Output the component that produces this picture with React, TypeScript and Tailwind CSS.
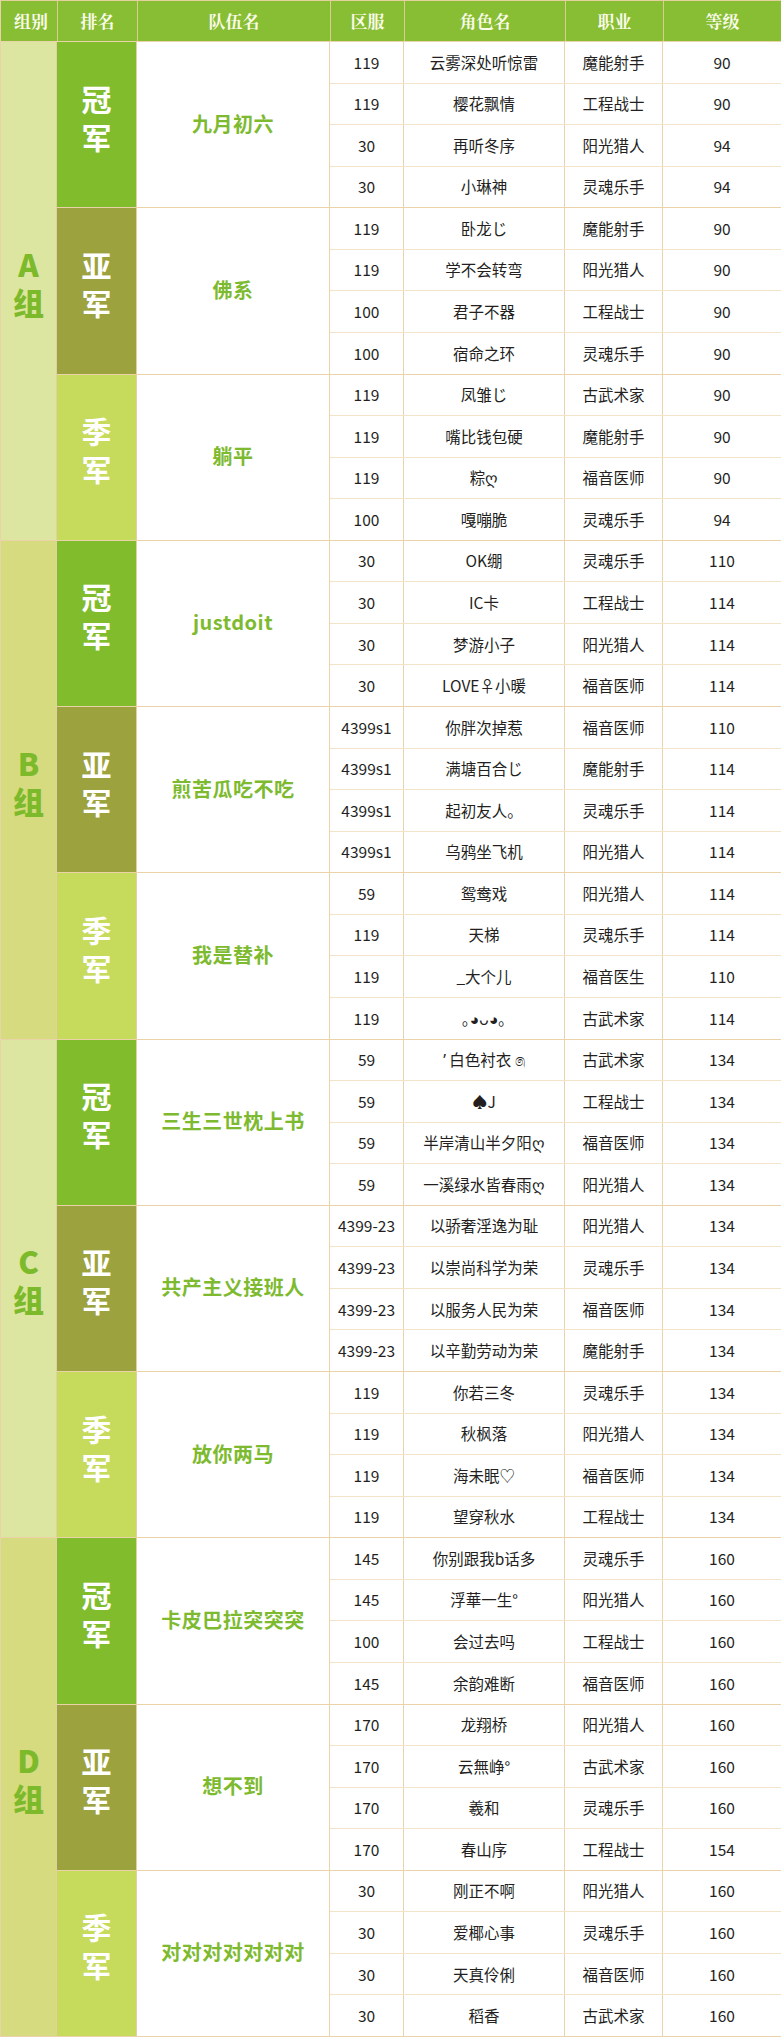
// Tournament results table — groups A-D, top three teams each

type Player = [server: string, name: string, job: string, level: string];

interface Rank {
  title: string;
  team: string;
  players: Player[];
}

interface Group {
  label: string;
  ranks: Rank[];
}

const GROUPS: Group[] = [
  {
    label: "A",
    ranks: [
      {
        title: "冠军",
        team: "九月初六",
        players: [
          ["119", "云雾深处听惊雷", "魔能射手", "90"],
          ["119", "樱花飘情", "工程战士", "90"],
          ["30", "再听冬序", "阳光猎人", "94"],
          ["30", "小琳神", "灵魂乐手", "94"],
        ],
      },
      {
        title: "亚军",
        team: "佛系",
        players: [
          ["119", "卧龙じ", "魔能射手", "90"],
          ["119", "学不会转弯", "阳光猎人", "90"],
          ["100", "君子不器", "工程战士", "90"],
          ["100", "宿命之环", "灵魂乐手", "90"],
        ],
      },
      {
        title: "季军",
        team: "躺平",
        players: [
          ["119", "凤雏じ", "古武术家", "90"],
          ["119", "嘴比钱包硬", "魔能射手", "90"],
          ["119", "粽ღ", "福音医师", "90"],
          ["100", "嘎嘣脆", "灵魂乐手", "94"],
        ],
      },
    ],
  },
  {
    label: "B",
    ranks: [
      {
        title: "冠军",
        team: "justdoit",
        players: [
          ["30", "OK绷", "灵魂乐手", "110"],
          ["30", "IC卡", "工程战士", "114"],
          ["30", "梦游小子", "阳光猎人", "114"],
          ["30", "LOVE♀小暖", "福音医师", "114"],
        ],
      },
      {
        title: "亚军",
        team: "煎苦瓜吃不吃",
        players: [
          ["4399s1", "你胖次掉惹", "福音医师", "110"],
          ["4399s1", "满塘百合じ", "魔能射手", "114"],
          ["4399s1", "起初友人。", "灵魂乐手", "114"],
          ["4399s1", "乌鸦坐飞机", "阳光猎人", "114"],
        ],
      },
      {
        title: "季军",
        team: "我是替补",
        players: [
          ["59", "鸳鸯戏", "阳光猎人", "114"],
          ["119", "天梯", "灵魂乐手", "114"],
          ["119", "_大个儿", "福音医生", "110"],
          ["119", "｡◕ᴗ◕｡", "古武术家", "114"],
        ],
      },
    ],
  },
  {
    label: "C",
    ranks: [
      {
        title: "冠军",
        team: "三生三世枕上书",
        players: [
          ["59", "ʼ 白色衬衣 ෧", "古武术家", "134"],
          ["59", "♠J", "工程战士", "134"],
          ["59", "半岸清山半夕阳ღ", "福音医师", "134"],
          ["59", "一溪绿水皆春雨ღ", "阳光猎人", "134"],
        ],
      },
      {
        title: "亚军",
        team: "共产主义接班人",
        players: [
          ["4399-23", "以骄奢淫逸为耻", "阳光猎人", "134"],
          ["4399-23", "以崇尚科学为荣", "灵魂乐手", "134"],
          ["4399-23", "以服务人民为荣", "福音医师", "134"],
          ["4399-23", "以辛勤劳动为荣", "魔能射手", "134"],
        ],
      },
      {
        title: "季军",
        team: "放你两马",
        players: [
          ["119", "你若三冬", "灵魂乐手", "134"],
          ["119", "秋枫落", "阳光猎人", "134"],
          ["119", "海未眠♡", "福音医师", "134"],
          ["119", "望穿秋水", "工程战士", "134"],
        ],
      },
    ],
  },
  {
    label: "D",
    ranks: [
      {
        title: "冠军",
        team: "卡皮巴拉突突突",
        players: [
          ["145", "你别跟我b话多", "灵魂乐手", "160"],
          ["145", "浮華一生°", "阳光猎人", "160"],
          ["100", "会过去吗", "工程战士", "160"],
          ["145", "余韵难断", "福音医师", "160"],
        ],
      },
      {
        title: "亚军",
        team: "想不到",
        players: [
          ["170", "龙翔桥", "阳光猎人", "160"],
          ["170", "云無峥°", "古武术家", "160"],
          ["170", "羲和", "灵魂乐手", "160"],
          ["170", "春山序", "工程战士", "154"],
        ],
      },
      {
        title: "季军",
        team: "对对对对对对对",
        players: [
          ["30", "刚正不啊", "阳光猎人", "160"],
          ["30", "爱椰心事", "灵魂乐手", "160"],
          ["30", "天真伶俐", "福音医师", "160"],
          ["30", "稻香", "古武术家", "160"],
        ],
      },
    ],
  },
];

const RANK_BG: Record<string, string> = {
  冠军: "bg-[#80bc2c]",
  亚军: "bg-[#9ca23d]",
  季军: "bg-[#c6da5b]",
};

const HEADERS = [
  { label: "组别", w: "w-[57px]" },
  { label: "排名", w: "w-[80px]" },
  { label: "队伍名", w: "w-[193px]" },
  { label: "区服", w: "w-[74px]" },
  { label: "角色名", w: "w-[161px]" },
  { label: "职业", w: "w-[98px]" },
  { label: "等级", w: "flex-1" },
];

function RankBlock({ rank, first }: { rank: Rank; first: boolean }) {
  return (
    <div className={`flex flex-1 ${first ? "" : "border-t border-[#ead3a8]"}`}>
      {/* Rank label, stacked vertically */}
      <div
        className={`w-[80px] shrink-0 flex items-center justify-center border-r border-[#e4cfa4] ${RANK_BG[rank.title]} pb-[4px]`}
      >
        <span className="[writing-mode:vertical-rl] text-[30px] leading-[30px] tracking-[8px] font-bold text-white">
          {rank.title}
        </span>
      </div>

      {/* Team name */}
      <div className="w-[193px] shrink-0 flex items-center justify-center border-r border-[#e8d3ab] bg-white pb-[2px]">
        <span className="text-[20px] font-bold text-[#7dba2f] tracking-[0.5px]">
          {rank.team}
        </span>
      </div>

      {/* Players */}
      <div className="flex flex-1 flex-col">
        {rank.players.map((p, i) => (
          <div
            key={p[1]}
            className={`flex flex-1 items-center text-[15.5px] text-[#241f1e] ${
              i === 0 ? "" : "border-t border-[#f2e3c9]"
            }`}
          >
            <div className="w-[74px] h-full shrink-0 flex items-center justify-center border-r border-[#e8d3ab]">
              {p[0]}
            </div>
            <div className="w-[161px] h-full shrink-0 flex items-center justify-center border-r border-[#e8d3ab] whitespace-nowrap">
              {p[1]}
            </div>
            <div className="w-[98px] h-full shrink-0 flex items-center justify-center border-r border-[#e8d3ab]">
              {p[2]}
            </div>
            <div className="flex-1 h-full flex items-center justify-center">{p[3]}</div>
          </div>
        ))}
      </div>
    </div>
  );
}

export default function App() {
  return (
    <div className="w-[781px] h-[2037px] flex flex-col bg-white border-l border-b border-[#e8d3ab] font-['Noto_Sans_CJK_SC','Noto_Sans',sans-serif]">
      {/* Header row */}
      <div className="flex h-[41px] shrink-0 bg-[#87be33] border-t border-[#e3d09f]">
        {HEADERS.map((h, i) => (
          <div
            key={h.label}
            className={`${h.w} ${
              i < HEADERS.length - 1 ? "border-r border-[#d9cf8f]" : ""
            } shrink-0 flex items-center justify-center text-[17px] font-bold text-[#fbfbea] font-['Noto_Serif_CJK_SC','Noto_Sans_CJK_SC',serif] ${
              i === 0 ? "pl-[4px]" : ""
            }`}
          >
            {h.label}
          </div>
        ))}
      </div>

      {GROUPS.map((g, gi) => (
        <div key={g.label} className="flex flex-1 border-t border-[#ead3a8]">
          {/* Group label */}
          <div
            className={`w-[56px] shrink-0 flex items-center justify-center border-r border-[#e4cfa4] ${
              gi % 2 === 0 ? "bg-[#dce6a0]" : "bg-[#d5db7e]"
            } pb-[6px]`}
          >
            <span className="[writing-mode:vertical-rl] [text-orientation:upright] text-[31px] leading-[31px] tracking-[7px] font-black text-[#7cba2c]">
              {g.label}组
            </span>
          </div>

          <div className="flex flex-1 flex-col">
            {g.ranks.map((r, ri) => (
              <RankBlock key={r.title} rank={r} first={ri === 0} />
            ))}
          </div>
        </div>
      ))}
    </div>
  );
}
